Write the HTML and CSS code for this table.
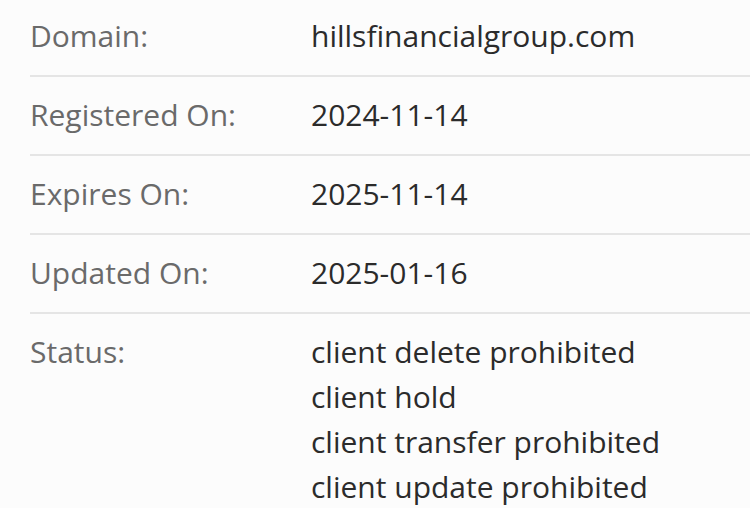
FILE: index.html
```html
<!DOCTYPE html>
<html>
<head>
<meta charset="utf-8">
<link rel="stylesheet" href="styles.css">
</head>
<body>
<div class="table">
  <div class="row">
    <div class="label">Domain:</div>
    <div class="value">hillsfinancialgroup.com</div>
  </div>
  <div class="row">
    <div class="label">Registered On:</div>
    <div class="value">2024-11-14</div>
  </div>
  <div class="row">
    <div class="label">Expires On:</div>
    <div class="value">2025-11-14</div>
  </div>
  <div class="row">
    <div class="label">Updated On:</div>
    <div class="value">2025-01-16</div>
  </div>
  <div class="row last">
    <div class="label">Status:</div>
    <div class="value">client delete prohibited<br>client hold<br>client transfer prohibited<br>client update prohibited</div>
  </div>
</div>
</body>
</html>
```
FILE: styles.css
```css
html, body {
  margin: 0;
  padding: 0;
  background: #fcfcfc;
}
body {
  font-family: "Open Sans", sans-serif;
  font-size: 30px;
  line-height: 45px;
  overflow: hidden;
  height: 508px;
}
.table {
  padding-left: 30px;
}
.row {
  display: flex;
  border-bottom: 2px solid #e5e5e5;
  padding: 15px 0 17px;
}
.row:first-child {
  padding-top: 13px;
}
.row.last {
  border-bottom: none;
}
.label {
  width: 281px;
  flex: none;
  color: #6a6a6a;
}
.value {
  color: #2b2b2b;
}
```
